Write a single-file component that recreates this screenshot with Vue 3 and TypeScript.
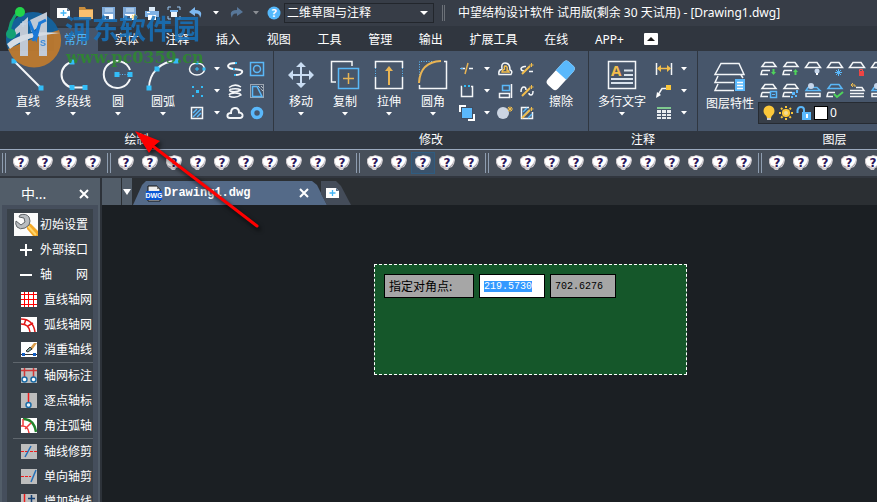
<script setup lang="ts">
import { onMounted, ref } from 'vue'

type Tool = { icon: string; label: string }
type SmallTool = { icon: string; label: string; menu?: boolean }

const W = 'fill="none" stroke="#f4f6f8" stroke-width="2"'
const W1 = 'fill="none" stroke="#f4f6f8" stroke-width="1.5"'
const B = 'fill="none" stroke="#5ab8f8" stroke-width="1.5"'
const Y = 'fill="none" stroke="#e8b454" stroke-width="2"'
const sq = (x: number, y: number, s = 5) =>
  `<rect x="${x - s / 2}" y="${y - s / 2}" width="${s}" height="${s}" fill="#33bdf8"/>`
const cap = `<path d="M5 2.500H13L16.500 7.500H1.500Z" ${W1}/>`
const stack = `<path d="M5 2.500H13L16 6.500H2Z M2 10.500H10M2 10.500L1 14.500H8" ${W1}/>`
const spark = '<path d="M4 14L12 6" stroke="#f2bd4b" stroke-width="2"/><path d="M13.500 3V7M11.500 5H15.500" stroke="#f2bd4b"/>'

/* Each entry is [width, height, markup]. */
const icons: Record<string, [number, number, string]> = {
  newFile: [14, 12, '<path d="M0 1H10L13 4V11H0Z" fill="#fff"/><path d="M10 1V4H13Z" fill="#56718f"/><path d="M6.500 3V9M3.500 6H9.500" stroke="#42b4f5" stroke-width="1.300"/>'],
  open: [14, 12, '<path d="M0 0H6L7 2H14V12H0Z" fill="#c98d3d"/><path d="M0 3H14V12H0Z" fill="#f8c070"/>'],
  save: [14, 14, '<path d="M1 1H14V14H1Z" fill="#7da9d9"/><path d="M4 2H12V6H4Z" fill="#a9c8e8"/><path d="M3 8H12V14H3Z" fill="#fff"/><path d="M5 10H8V13H5Z" fill="#42597a"/>'],
  saveAs: [16, 14, '<path d="M1 1H14V14H1Z" fill="#7da9d9"/><path d="M4 2H12V6H4Z" fill="#a9c8e8"/><path d="M3 8H12V14H3Z" fill="#fff"/><path d="M5 10H8V13H5Z" fill="#42597a"/><path d="M12.500 8V14M9.500 11H15.500M10 9L15 13M15 9L10 13" stroke="#f4d069"/>'],
  print: [14, 14, '<path d="M4 1H10V5H4Z" fill="#dbe9f7"/><path d="M0 5H14V11H0Z" fill="#7fb2e5"/><path d="M3 9H11V14H3Z" fill="#fff"/><path d="M2 6.500H5" stroke="#fff"/>'],
  preview: [14, 14, '<path d="M1 4V1H4M10 1H13V4M13 10V13H10M4 13H1V10" fill="none" stroke="#9ccaf5"/><path d="M3 4H11V6H3Z" fill="#72b1ee"/><path d="M4 6H10V11H4Z" fill="#eef5fc"/>'],
  undo: [14, 12, '<path d="M6 0L0 5L6 9V6.500Q11 6 11 11Q15 3 6 3Z" fill="#7db9f2"/>'],
  redo: [14, 12, '<path d="M8 0L14 5L8 9V6.500Q3 6 3 11Q-1 3 8 3Z" fill="#587799"/>'],
  help: [14, 14, '<circle cx="7" cy="7" r="6.500" fill="#55b8fb"/><text x="7" y="11" text-anchor="middle" font-family="Open Sans" font-weight="700" font-size="11" fill="#fff">?</text>'],
  line: [34, 34, `<path d="M3 3L30 30" ${W}/>${sq(3, 3)}${sq(30, 30)}`],
  polyline: [34, 34, `<path d="M16 4A13 13 0 0 0 16 29.500H29" ${W}/>${sq(16, 4)}${sq(16, 29.5)}${sq(29, 29.5)}`],
  circle: [34, 34, `<path d="M29 12A13.500 13.500 0 1 0 29 21" ${W}/><path d="M16 16.500H29" stroke="#5ab8f8" stroke-dasharray="1 1.500"/>${sq(16, 16.5)}${sq(29, 16.5)}`],
  arc: [34, 34, `<path d="M3 30A27 27 0 0 1 30 3" ${W}/>${sq(3, 30)}${sq(11, 11)}${sq(30, 3)}`],
  move: [34, 34, '<path d="M17 6V28M6 17H28" stroke="#c9dcf2" stroke-width="2"/><path d="M17 4L12 9H22ZM17 30L12 25H22ZM4 17L9 12V22ZM30 17L25 12V22Z" fill="#c9dcf2"/>'],
  copy: [34, 34, `<path d="M24 8V3.500H3.500V24H8" ${W1}/><rect x="10.500" y="10.500" width="20" height="20" ${B}/><path d="M20.500 15V26M15 20.500H26" stroke="#e8b454" stroke-width="1.500"/>`],
  stretch: [34, 34, `<path d="M3.500 10V3.500H30.500V10M3.500 19V30.500H30.500V19" ${W1}/><path d="M3.500 10V19M30.500 10V19" stroke="#5ab8f8" stroke-dasharray="1 1.500"/><path d="M17 10V27" ${Y}/><path d="M17 8L13 13H21Z" fill="#e8b454"/>`],
  fillet: [34, 34, `<path d="M28 3.500H30.500V30.500H3.500V27" ${W1}/><path d="M3.500 22V3.500H16" fill="none" stroke="#5ab8f8" stroke-dasharray="1 1.500"/><path d="M3 25Q4 4 25 3" ${Y}/>`],
  eraser: [34, 34, '<g transform="rotate(-48 17 17)"><rect x="1" y="10" width="31" height="14" rx="4" fill="#fff"/><path d="M17 10H28Q32 10 32 14V20Q32 24 28 24H17Z" fill="#5ab8fb"/></g>'],
  mtext: [34, 34, `<rect x="3.500" y="3.500" width="27" height="27" ${W1}/><text x="6" y="18" font-family="Open Sans" font-weight="700" font-size="15" fill="#f2bd4b">A</text><path d="M19 12.500H28M19 17H28" stroke="#d9e2ec" stroke-width="2"/><path d="M6 21H28M6 25H28" stroke="#d9e2ec" stroke-width="2"/>`],
  layers: [34, 34, `<path d="M8 5.500H26L31 16.500H2Z M5 18L2 24.500H21M5 26L2 32.500H21M28 17L30 20" ${W1}/><rect x="22" y="21" width="10" height="12" fill="#5ab8fb"/><path d="M24 24.500H30M24 27.500H30M24 30.500H30" stroke="#fff" stroke-width="1.500"/>`],
  ellipse: [18, 18, `<ellipse cx="9" cy="9" rx="7.500" ry="6" ${W1}/><path d="M9 7V11M7 9H11" stroke="#33bdf8"/>${sq(9, 3, 3)}${sq(16, 9, 3)}`],
  spline: [18, 18, `<path d="M10 3C0 3 0 8 7 9S17 10 16 12.500S12 15 9 15" ${W}/>${sq(10, 3, 2)}${sq(8, 9, 2)}${sq(9, 15, 2)}`],
  region: [18, 18, `<rect x="2.500" y="2.500" width="13" height="13" ${B}/><circle cx="9" cy="9" r="3.500" ${B}/>`],
  points: [18, 18, `${sq(5, 5, 2)}${sq(14, 5, 2)}${sq(9.5, 9.5, 3)}${sq(5, 14, 2)}${sq(14, 14, 2)}`],
  helix: [18, 18, `<path d="M3 5.500Q9 1 15 5M15 8Q9 11 4 9Q3 7 6 7Q11 6 15 8M3 13Q4 11 9 11T15 13Q9 17 3 14" ${W1}/>`],
  wipeout: [18, 18, `<rect x="2.500" y="2.500" width="13" height="13" fill="none" stroke="#f4f6f8" stroke-dasharray="1 1"/><path d="M4.500 4.500H9L14 14.500H4.500Z" ${B}/><path d="M10 4L15 9M13 4L15 6" stroke="#f4f6f8" stroke-dasharray="1 1"/>`],
  hatch: [18, 18, `<rect x="3.500" y="3.500" width="11" height="11" ${W1}/><path d="M5 9L9 5M5 13L13 5M9 13L13 9" stroke="#5ab8f8" stroke-width="1.500"/>`],
  cloud: [18, 18, `<path d="M4 14Q1 14 1.500 11Q2 9 5 9Q5 4 9 4Q13 4 13 8.500Q17 9 16.500 12Q16 14 14 14Z" ${W}/>`],
  donut: [18, 18, '<circle cx="9" cy="9" r="4.500" fill="none" stroke="#5ab8fb" stroke-width="3.500"/>'],
  trim: [18, 18, '<path d="M3 8.500H7M11 8.500H15" stroke="#f4f6f8" stroke-width="1.500"/><path d="M10 3L7 14" stroke="#e8b454" stroke-width="1.500"/><path d="M2 8.500H5" stroke="#5ab8f8"/>'],
  offset: [18, 18, `<path d="M3 14.500H15Q17 11 14 10Q14 3 9 3Q5 3 6 9Q2 10 3 14.500Z" ${W1}/><path d="M6 12H13Q12 10 11 10Q12 6 9 6Q8 6 8.500 9Q6 10 6 12Z" fill="none" stroke="#f2bd4b" stroke-width="1.500"/>`],
  breakLine: [18, 18, `<path d="M6 11Q3 11 3 8.500Q4 6 8 6.500M11 11.500H15" ${W1}/>${spark}`],
  array: [18, 18, `<path d="M4 4.500H3.500V14.500H14.500V4.500H13" ${W1}/>${sq(7, 4, 2)}${sq(11, 4, 2)}`],
  align: [18, 18, `<rect x="6.500" y="3.500" width="7" height="5" ${B}/><rect x="3.500" y="11.500" width="10" height="4" ${W1}/><path d="M15.500 2V16" ${W1}/>`],
  joinLine: [18, 18, `<path d="M3 10Q3 5 6 5Q8 5 8 8M11 11Q11 13 13 13Q15 13 15 9" ${W1}/>${spark}`],
  order: [18, 18, '<path d="M10 10H17V17H10Z" fill="#fff"/><path d="M1 1H8V4H4V8H1Z" fill="#fff"/><rect x="3.500" y="3.500" width="11" height="11" fill="#5ab8fb" stroke="#3f4d60"/>'],
  explode: [18, 18, '<circle cx="7" cy="9" r="6" fill="#ccd5e3"/><path d="M14 2.500V8M11.500 5H17M12 3L16 7M16 3L12 7" stroke="#f2bd4b"/>'],
  editHatch: [18, 18, `<path d="M11 3.500H3.500V14.500H14.500V8" ${W1}/><path d="M5 8L9 4M5 12L11 6M10 14L14 10" stroke="#5ab8f8" stroke-width="1.500"/>${spark}`],
  dim: [18, 18, '<path d="M1.500 3V15M16.500 3V15" stroke="#f4f6f8" stroke-width="1.500"/><path d="M3 8.500H15" stroke="#f2bd4b" stroke-width="1.500"/><path d="M2 8.500L6 5V12ZM16 8.500L12 5V12Z" fill="#f2bd4b"/>'],
  leader: [18, 18, `<path d="M3 13L7 6.500H12" ${W1}/><path d="M1 16L2 10L6 13Z" fill="#fff"/><rect x="11" y="3" width="5" height="5" fill="#fbc73a"/>`],
  table: [18, 18, '<path d="M2 3H16V5H2Z" fill="#7fc98f"/><path d="M2 6H6V9H2ZM7 6H11V9H7ZM12 6H16V9H12ZM2 10H6V12H2ZM7 10H11V12H7ZM12 10H16V12H12ZM2 13H6V15H2ZM7 13H11V15H7ZM12 13H16V15H12Z" fill="#e8ecf0"/>'],
  layDown: [18, 18, `${stack}<path d="M13.500 9V13" stroke="#4fd35b" stroke-width="2"/><path d="M11 12H16L13.500 15Z" fill="#4fd35b"/>`],
  layUp: [18, 18, `${stack}<path d="M13.500 11V15" stroke="#4fd35b" stroke-width="2"/><path d="M11 12H16L13.500 9Z" fill="#4fd35b"/>`],
  layOff: [18, 18, `${cap}<circle cx="13" cy="11" r="2.500" fill="#c5d5ea"/><path d="M12 13H14V15H12Z" fill="#fff"/>`],
  layFreeze: [18, 18, `${cap}<path d="M12.500 9V16M9 12.500H16M10 10L15 15M15 10L10 15" stroke="#5ab8fb"/>`],
  layLock: [18, 18, `${cap}<path d="M11.500 11V9.500H14.500V11" fill="none" stroke="#ee5555"/><rect x="11" y="11" width="5" height="5" fill="#ee4444"/>`],
  layPanel: [18, 18, `${stack}<rect x="10.500" y="9.500" width="6" height="6" fill="#42566e" stroke="#5ab8fb" stroke-width="1.500"/><path d="M12 12.500H15" stroke="#5ab8fb"/>`],
  layWalk: [18, 18, `${stack}<path d="M10 10h3v3h-3zM14 8h2v3h-2zM9 14h2v2h-2zM13 13h2v2h-2z" fill="#5ab8fb"/>`],
  layIso: [18, 18, `<path d="M2 14.500H16V11.500H2Z" ${W1}/><path d="M4 5.500H13L16 8.500H2Z" ${B}/><circle cx="7" cy="4" r="3" fill="#c5d5ea"/>`],
  layMatch: [18, 18, `<path d="M5 2.500H13L16 6.500H2Z" ${B}/><path d="M2 10.500H9M2 10.500L1 14.500H7" ${W1}/><path d="M8 12L11 15L17 10" fill="none" stroke="#4fd35b" stroke-width="2"/>`],
  layPrev: [18, 18, `<path d="M8 5.500H14L16 8.500H2M2 11.500H16M2 14.500H16" ${W1}/><path d="M5 1L3 3L5 5M3 3H7V5" fill="none" stroke="#f2bd4b"/>`],
  bulb: [14, 16, '<circle cx="7" cy="6" r="5.500" fill="#fbc73a"/><path d="M4 10H10L9 13H5Z" fill="#fbc73a"/><path d="M5 14H9" stroke="#fff" stroke-width="1.500"/>'],
  sun: [16, 16, '<circle cx="8" cy="8" r="4" fill="#fbc73a"/><path d="M8 1V15M1 8H15M3 3L13 13M13 3L3 13" stroke="#fbc73a" stroke-width="2" stroke-dasharray="2 1"/><circle cx="8" cy="8" r="2" fill="#f3dc96"/>'],
  unlock: [16, 16, '<path d="M1.500 8V5Q2 2 5 2T8 5V8" fill="none" stroke="#5ab8fb" stroke-width="2"/><rect x="6" y="7" width="9" height="8" fill="#5ab8fb"/><path d="M10 9H12V13H10Z" fill="#fff"/>'],
  question: [18, 18, '<path d="M2 4L4 2H7L9 1L13 2L16 3L17 6L16 10L14 13L11 14L10 16H7L5 14L3 13L1 9V5Z" fill="#cfcace"/><path d="M2 5L5 3L9 2L14 3L16 5L15 8L13 11L9 14L6 12L3 11L2 8Z" fill="#fff"/><path d="M3 12L6 13M12 13L15 10" stroke="#a9a3ab"/><text x="9" y="13" text-anchor="middle" font-family="DejaVu Sans" font-weight="700" font-size="12" fill="#2c1559">?</text>'],
  wrench: [24, 23, '<path d="M0 0H24V23H0Z" fill="#fbfbfb"/><path d="M12 9L17 11L24 18V23H19L13 16Z" fill="#f4a928"/><path d="M14 13L22 22" stroke="#ffd66b" stroke-width="2"/><path d="M6 2Q12 0 15 4Q17 8 15 12L11 15Q6 17 3 14Q1 11 2 8L7 12L11 9L10 5L5 4Z" fill="#b8bcc0" stroke="#5f6468"/>'],
  plus: [14, 14, '<path d="M7 1V13M1 7H13" stroke="#fff" stroke-width="2"/>'],
  minus: [14, 14, '<path d="M1 7H13" stroke="#fff" stroke-width="2"/>'],
  grid: [16, 15, '<path d="M0 0H16V15H0Z" fill="#fff"/><path d="M0 2.500H16M0 7.500H16M0 12.500H16M3.500 0V15M7.500 0V15M12.500 0V15" stroke="#f00"/>'],
  arcGrid: [16, 15, '<path d="M0 0H16V15H0Z" fill="#fff"/><path d="M0 2Q12 2 14 15M0 7Q8 7 9 15M5 2L3 8M12 6L7 9" fill="none" stroke="#e31818" stroke-width="1.500"/>'],
  dedupe: [16, 15, '<path d="M0 0H16V15H0Z" fill="#fff"/><path d="M8 7L13 1H16L11 8Z" fill="#d99c4a"/><path d="M5 9L9 5L11 7L7 10Z" fill="#7aa3a0" stroke="#333"/><path d="M0 12.500H16" stroke="#333"/><path d="M1 11h3v3h-3zM12 11h3v3h-3z" fill="#125ec4"/>'],
  axisDim: [16, 15, '<path d="M0 0H16V15H0Z" fill="#bdbdbd"/><path d="M0 2.500H16M3.500 0V9M12.500 0V9" stroke="#cf3838" stroke-width="1.500"/><circle cx="3.500" cy="11.500" r="2.500" fill="#fff" stroke="#1c6ca6" stroke-width="1.500"/><circle cx="12.500" cy="11.500" r="2.500" fill="#fff" stroke="#1c6ca6" stroke-width="1.500"/>'],
  pointDim: [16, 15, '<path d="M0 0H16V15H0Z" fill="#bdbdbd"/><path d="M7.500 0V9" stroke="#ee1c1c" stroke-width="1.500"/><circle cx="7.500" cy="12" r="2.500" fill="#e8f6ff" stroke="#1c6ca6" stroke-width="1.500"/>'],
  arcDim: [16, 15, '<path d="M0 0H16V15H0Z" fill="#fff"/><path d="M2 1Q13 1 15 14" fill="none" stroke="#23842d" stroke-width="2.500"/><path d="M0 8Q7 7 8 15M2 1V8M10 5L4 11" fill="none" stroke="#ef3a3a" stroke-width="1.500"/>'],
  axisTrim: [16, 15, '<path d="M0 0H16V15H0Z" fill="#bdbdbd"/><path d="M0 7.500H7M9 7.500H16" stroke="#ef1c1c" stroke-dasharray="3 1"/><path d="M4 13L10 2" stroke="#236eb7" stroke-width="1.500"/>'],
  oneTrim: [16, 15, '<path d="M0 0H16V15H0Z" fill="#bdbdbd"/><path d="M0 7.500H10" stroke="#ef1c1c" stroke-dasharray="3 1"/><path d="M10 13L15 1" stroke="#236eb7" stroke-width="1.500"/>'],
  addAxis: [16, 15, '<path d="M0 0H16V15H0Z" fill="#bdbdbd"/><path d="M3.500 0V15" stroke="#ef1c1c" stroke-width="1.500"/><path d="M10.500 1V8M7 4.500H14" stroke="#123f73" stroke-width="1.500"/>'],
  dwg: [18, 17, '<path d="M3 1H12L15 4V16H3Z" fill="#eee" stroke="#111"/><path d="M12 1V4H15" fill="#777"/><path d="M1 6H17V15H1Z" fill="#0a57d5"/><text x="9" y="13" text-anchor="middle" font-family="Liberation Sans" font-size="7" fill="#fff">DWG</text>'],
  close: [10, 10, '<path d="M1 1L9 9M9 1L1 9" stroke="#fff" stroke-width="2"/>'],
  down: [6, 4, '<path d="M0 0H6L3 3.500Z" fill="#fff"/>'],
  downDim: [6, 4, '<path d="M0 0H6L3 3.500Z" fill="#8b8f95"/>'],
  downWide: [8, 4, '<path d="M0 0H8L4 4Z" fill="#fff"/>'],
  downTall: [8, 8, '<path d="M0 1H8L4 7Z" fill="#fff"/>'],
  up: [14, 12, '<rect width="14" height="12" rx="1" fill="#fff"/><path d="M3 8H11L7 4Z" fill="#1b1b1b"/>'],
}

const quick = ['newFile', 'open', 'save', 'saveAs', 'print', 'preview', 'undo']
const tabs = ['常用', '实体', '注释', '插入', '视图', '工具', '管理', '输出', '扩展工具', '在线', 'APP+']
const drawTools: Tool[] = [
  { icon: 'line', label: '直线' },
  { icon: 'polyline', label: '多段线' },
  { icon: 'circle', label: '圆' },
  { icon: 'arc', label: '圆弧' },
]
const modifyTools: Tool[] = [
  { icon: 'move', label: '移动' },
  { icon: 'copy', label: '复制' },
  { icon: 'stretch', label: '拉伸' },
  { icon: 'fillet', label: '圆角' },
]
const drawSmall: SmallTool[] = [
  { icon: 'ellipse', label: '椭圆', menu: true }, { icon: 'spline', label: '样条曲线' }, { icon: 'region', label: '面域' },
  { icon: 'points', label: '点', menu: true }, { icon: 'helix', label: '螺旋' }, { icon: 'wipeout', label: '区域覆盖' },
  { icon: 'hatch', label: '填充', menu: true }, { icon: 'cloud', label: '云线' }, { icon: 'donut', label: '圆环' },
]
const modifySmall: SmallTool[] = [
  { icon: 'trim', label: '修剪', menu: true }, { icon: 'offset', label: '偏移' }, { icon: 'breakLine', label: '打断' },
  { icon: 'array', label: '阵列', menu: true }, { icon: 'align', label: '对齐' }, { icon: 'joinLine', label: '合并' },
  { icon: 'order', label: '次序', menu: true }, { icon: 'explode', label: '分解' }, { icon: 'editHatch', label: '编辑填充' },
]
const noteSmall: SmallTool[] = [
  { icon: 'dim', label: '标注', menu: true },
  { icon: 'leader', label: '引线', menu: true },
  { icon: 'table', label: '表格', menu: true },
]
const layerTools = [
  'layDown', 'layUp', 'layOff', 'layFreeze', 'layLock', 'layOff',
  'layPanel', 'layWalk', 'layIso', 'layMatch', 'layPrev', 'layIso',
]
const groups = [4, 10, 5, 11, 5]
const side = [
  [
    { icon: 'wrench', label: '初始设置', top: true },
    { icon: 'plus', label: '外部接口', top: true },
    { icon: 'minus', label: '轴　　网', top: true },
    { icon: 'grid', label: '直线轴网' },
    { icon: 'arcGrid', label: '弧线轴网' },
    { icon: 'dedupe', label: '消重轴线' },
  ],
  [
    { icon: 'axisDim', label: '轴网标注' },
    { icon: 'pointDim', label: '逐点轴标' },
    { icon: 'arcDim', label: '角注弧轴' },
  ],
  [
    { icon: 'axisTrim', label: '轴线修剪' },
    { icon: 'oneTrim', label: '单向轴剪' },
    { icon: 'addAxis', label: '增加轴线' },
  ],
]

const icon = (name: string) => ({
  width: icons[name][0],
  height: icons[name][1],
  viewBox: `0 0 ${icons[name][0]} ${icons[name][1]}`,
  innerHTML: icons[name][2],
  'aria-hidden': true,
})

const workspace = ref('二维草图与注释')
const cornerX = ref('219.5730')
const cornerY = ref('702.6276')
const cornerInput = ref<HTMLInputElement | null>(null)
onMounted(() => {
  cornerInput.value?.focus({ preventScroll: true })
  cornerInput.value?.select()
})
</script>

<template>
  <div class="app">
    <header class="head">
      <div class="titlebar">
        <div class="quick">
          <button v-for="q in quick" :key="q" :aria-label="q"><svg v-bind="icon(q)" /></button>
          <button class="narrow" aria-label="undo menu"><svg v-bind="icon('down')" /></button>
          <button aria-label="redo"><svg v-bind="icon('redo')" /></button>
          <button class="narrow" aria-label="redo menu"><svg v-bind="icon('downDim')" /></button>
          <button class="narrow" aria-label="help"><svg v-bind="icon('help')" /></button>
        </div>
        <label class="workspace">
          <select v-model="workspace" aria-label="工作空间">
            <option>二维草图与注释</option>
          </select>
          <svg v-bind="icon('downWide')" />
        </label>
        <span class="handle"></span>
        <h1>中望结构设计软件 试用版(剩余 30 天试用) - [Drawing1.dwg]</h1>
      </div>
      <div class="tabrow">
        <nav>
          <a v-for="(t, i) in tabs" :key="t" href="#" :class="{ active: i === 0 }">{{ t }}</a>
        </nav>
        <button aria-label="collapse"><svg v-bind="icon('up')" /></button>
      </div>
    </header>

    <div class="ribbon">
      <section class="panel draw">
        <div class="body">
          <div class="bigs spaced">
            <button v-for="t in drawTools" :key="t.label" class="big">
              <svg v-bind="icon(t.icon)" /><span>{{ t.label }}</span><svg v-bind="icon('down')" />
            </button>
          </div>
          <div class="smalls">
            <template v-for="s in drawSmall" :key="s.label">
              <button :aria-label="s.label"><svg v-bind="icon(s.icon)" /></button>
              <button v-if="s.menu" :aria-label="s.label + '菜单'"><svg v-bind="icon('down')" /></button>
            </template>
          </div>
        </div>
        <h2>绘制</h2>
      </section>
      <section class="panel modify">
        <div class="body">
          <div class="bigs">
            <button v-for="t in modifyTools" :key="t.label" class="big">
              <svg v-bind="icon(t.icon)" /><span>{{ t.label }}</span><svg v-bind="icon('down')" />
            </button>
          </div>
          <div class="smalls">
            <template v-for="s in modifySmall" :key="s.label">
              <button :aria-label="s.label"><svg v-bind="icon(s.icon)" /></button>
              <button v-if="s.menu" :aria-label="s.label + '菜单'"><svg v-bind="icon('down')" /></button>
            </template>
          </div>
          <button class="big"><svg v-bind="icon('eraser')" /><span>擦除</span></button>
        </div>
        <h2>修改</h2>
      </section>
      <section class="panel note">
        <div class="body">
          <button class="big wide">
            <svg v-bind="icon('mtext')" /><span>多行文字</span><svg v-bind="icon('down')" />
          </button>
          <div class="smalls pair">
            <template v-for="s in noteSmall" :key="s.label">
              <button :aria-label="s.label"><svg v-bind="icon(s.icon)" /></button>
              <button :aria-label="s.label + '菜单'"><svg v-bind="icon('down')" /></button>
            </template>
          </div>
        </div>
        <h2>注释</h2>
      </section>
      <section class="panel layer">
        <div class="body">
          <button class="big wide props"><svg v-bind="icon('layers')" /><span>图层特性</span></button>
          <div class="layerside">
            <div class="layergrid">
              <button v-for="(l, i) in layerTools" :key="i" :aria-label="l"><svg v-bind="icon(l)" /></button>
            </div>
            <button class="current">
              <svg v-bind="icon('bulb')" /><svg v-bind="icon('sun')" /><svg v-bind="icon('unlock')" />
              <i></i><span>0</span>
            </button>
          </div>
        </div>
        <h2>图层</h2>
      </section>
    </div>

    <div class="toolbar">
      <div v-for="(n, g) in groups" :key="g" class="group">
        <span class="grip"></span>
        <button v-for="k in n" :key="k" :class="{ hot: g === 2 && k === 3 }" aria-label="工具">
          <svg v-bind="icon('question')" />
        </button>
      </div>
    </div>

    <div class="work">
      <aside>
        <div class="sidehead"><span>中...</span><button aria-label="关闭"><svg v-bind="icon('close')" /></button></div>
        <div class="sidebody">
          <div class="list">
            <ul v-for="(s, i) in side" :key="i">
              <li v-for="e in s" :key="e.label">
                <button :class="{ top: 'top' in e }">
                  <b><svg v-bind="icon(e.icon)" /></b><span>{{ e.label }}</span>
                </button>
              </li>
            </ul>
          </div>
        </div>
      </aside>
      <main>
        <div class="docs">
          <span class="cell"></span>
          <button class="cell pick" aria-label="文档列表"><svg v-bind="icon('downTall')" /></button>
          <div class="doc">
            <svg v-bind="icon('dwg')" /><span>Drawing1.dwg</span>
            <button aria-label="关闭文档"><svg v-bind="icon('close')" /></button>
          </div>
          <button class="add" aria-label="新建"><svg v-bind="icon('newFile')" /></button>
        </div>
        <div class="canvas">
          <div class="window">
            <label for="cx">指定对角点:</label>
            <input id="cx" ref="cornerInput" v-model="cornerX" />
            <input v-model="cornerY" class="idle" aria-label="Y" />
          </div>
        </div>
      </main>
    </div>

    <div class="brand">
      <svg class="emblem" width="62" height="72" viewBox="0 0 62 72" aria-hidden="true">
        <circle cx="33" cy="39" r="27" fill="#14639f" />
        <path d="M8 49Q32 38 59 30A27 27 0 0 1 9 51Z" fill="#bd7a30" />
        <path d="M15 29L28 17V56H20V32L14 36ZM30 20L47 12V56H39V27L31 32Z" fill="#c9d2de" />
        <path d="M7 44Q22 29 60 33Q25 36 10 49Z" fill="#dfe6ee" />
        <path d="M29 21L36 38L40 22M33 41L40 23L46 20" fill="none" stroke="#1b7de0" stroke-width="3" />
        <text x="40" y="46" font-family="Liberation Sans" font-weight="700" font-size="9" fill="#3d8fe0">S</text>
        <path d="M20 10Q8 22 10 34" fill="none" stroke="#12a878" stroke-width="3" />
        <circle cx="20" cy="12" r="5" fill="#22dd4c" />
        <circle cx="11" cy="34" r="5" fill="#12a878" />
        <path d="M23 21V27M20 24H26" stroke="#cfe0f2" />
      </svg>
      <strong>河东软件园</strong>
      <em>www.pc0359.cn</em>
    </div>
    <svg class="pointer" width="136" height="108" viewBox="0 0 136 108" aria-hidden="true">
      <path d="M22 20L125 99" stroke="#fe0000" stroke-width="3" stroke-linecap="round" />
      <path d="M3 4L28 14L22 19L17 26Z" fill="#fe0000" />
    </svg>
  </div>
</template>

<style>
body {
  margin: 0;
  overflow: hidden;
  background: #1b1f23;
}
</style>

<style scoped>
.app {
  position: relative;
  display: flex;
  flex-direction: column;
  height: 100vh;
  overflow: hidden;
  color: #fff;
  font: 12px/16px "Noto Sans", "Noto Sans CJK SC", sans-serif;
}
.app * { box-sizing: border-box; }
svg { display: block; flex: none; }
button {
  display: flex;
  align-items: center;
  justify-content: center;
  padding: 0;
  border: 0;
  background: none;
  color: inherit;
  font: inherit;
}
h1, h2, ul { margin: 0; padding: 0; font: inherit; list-style: none; }
a { color: inherit; text-decoration: none; }

.head { background: linear-gradient(90deg, #2a2f38 50px, #30363f 50px); }
.titlebar {
  display: flex;
  align-items: center;
  height: 26px;
  margin-left: 50px;
  background: #373d47;
  white-space: nowrap;
}
.quick { display: flex; padding: 0 1px 0 3px; }
.quick button { width: 22px; height: 22px; }
.quick button.narrow { width: 18px; }
.workspace { position: relative; flex: none; width: 150px; height: 20px; }
.workspace select {
  width: 100%;
  height: 100%;
  padding: 0 2px;
  border: 1px solid #22262c;
  background: #373d47;
  color: #fff;
  font: inherit;
  appearance: none;
}
.workspace svg { position: absolute; right: 6px; top: 8px; }
.handle { width: 3px; height: 16px; margin: 0 13px 0 8px; border: solid #6b7077; border-width: 0 1px; }
.tabrow { display: flex; align-items: center; height: 25px; padding-left: 54px; }
nav { display: flex; flex: 0 0 580px; justify-content: space-between; height: 100%; }
nav a { padding: 6px 10px 0; }
nav a.active { margin-top: 2px; padding-top: 4px; background: #47566b; color: #4db8fa; }
.tabrow button { margin-left: 10px; height: 20px; }

.ribbon { display: flex; flex: none; overflow: hidden; border-bottom: 1px solid #9aa9be; background: #47566b; }
.panel { flex: none; border-right: 1px solid #303741; }
.panel.draw { width: 274px; }
.panel.modify { width: 315px; }
.panel.note { width: 109px; }
.panel.layer { flex: 1 0 274px; }
.body { display: flex; height: 80px; padding: 7px 0 0 5px; }
.draw .body { padding-left: 6px; }
.layer .body { padding-left: 4px; }
.bigs { display: flex; }
.bigs.spaced { gap: 1px; }
.big {
  flex: none;
  flex-direction: column;
  justify-content: flex-start;
  width: 44px;
  height: 70px;
  gap: 2px;
  white-space: nowrap;
}
.big.wide { width: 56px; }
.big.props { gap: 4px; }
.smalls { display: grid; grid-template-columns: 24px 16px 20px 24px; grid-auto-rows: 22px; }
.smalls.pair { grid-template-columns: 24px 16px; }
.note .smalls { margin-left: 2px; }
.panel h2 { height: 18px; background: #303741; line-height: 18px; text-align: center; }
.layerside { flex: 1; overflow: hidden; }
.layergrid { display: grid; grid-template-columns: repeat(6, 22px); grid-auto-rows: 22px; }
.current {
  justify-content: flex-start;
  gap: 2px;
  width: 100%;
  height: 22px;
  padding-left: 3px;
  border: 1px solid #262b32;
  background: #373e48;
}
.current i { width: 14px; height: 14px; border: 1px solid #000; background: #fff; }

.toolbar {
  display: flex;
  flex: none;
  height: 28px;
  overflow: hidden;
  border-bottom: 2px solid #31363e;
  background: #474f5a;
}
.group { display: flex; flex: none; align-items: center; }
.group button { width: 24px; height: 22px; }
.group button.hot { border: 1px solid #2f5c80; background: #3b536c; }
.grip { width: 4px; height: 20px; margin: 0 3px 0 2px; border: solid #8e9db0; border-width: 0 1px; background: #474f5a; }

.work { display: flex; flex: 1; min-height: 0; }
aside {
  display: flex;
  flex: none;
  flex-direction: column;
  width: 102px;
  border-right: 2px solid #2d3239;
  background: #525d69;
}
.sidehead {
  display: flex;
  align-items: center;
  justify-content: space-between;
  height: 27px;
  padding: 4px 11px 0 21px;
  font-size: 14px;
}
.sidebody { flex: 1; margin: 0 2px; padding: 4px 5px 0; overflow: hidden; background: #454e5c; }
.list { height: 100%; padding-top: 3px; overflow: hidden; background: #394149; }
ul + ul { margin-left: 6px; border-top: 1px solid #5f666d; }
li button { justify-content: flex-start; gap: 7px; width: 100%; height: 25px; padding-left: 14px; white-space: nowrap; }
ul + ul li button { padding-left: 8px; }
li button.top { gap: 2px; padding-left: 7px; }
li b { display: flex; justify-content: center; width: 16px; font-weight: 400; }
li .top b { width: 24px; }

main { display: flex; flex: 1; flex-direction: column; min-width: 0; background: #1b1f23; }
.docs { display: flex; flex: none; height: 27px; background: #2b2f33; }
.cell { width: 19px; margin-right: 1px; background: #525d69; }
.cell + .cell { width: 10px; }
.doc {
  display: flex;
  align-items: center;
  width: 194px;
  margin-top: 3px;
  padding: 0 18px 0 12px;
  background: #546a88;
  clip-path: polygon(0 100%, 9px 4px, 13px 0, 179px 0, 184px 4px, 100% 100%);
  font: bold 12px/16px "Liberation Mono", monospace;
}
.doc span { flex: 1; padding-left: 1px; }
.add {
  justify-content: flex-start;
  width: 30px;
  margin: 3px 0 0 -6px;
  padding-left: 5px;
  background: #444c59;
  clip-path: polygon(0 0, 15px 0, 20px 5px, 100% 100%, 6px 100%, 0 13px);
}
.canvas { position: relative; flex: 1; }
.window {
  position: absolute;
  left: 272px;
  top: 59px;
  display: flex;
  gap: 5px;
  align-items: flex-start;
  width: 313px;
  height: 111px;
  padding: 9px;
  border: 1px dashed #fff;
  background: #15572a;
}
.window label, .window input {
  width: 66px;
  height: 24px;
  padding: 0 4px;
  border: 1px solid #000;
  border-radius: 0;
  outline: none;
  background: #fff;
  color: #000;
  font: 12px/22px "Noto Sans CJK SC", sans-serif;
}
.window label { width: 90px; background: #a6a6a6; }
.window input { font: 10px/14px "Liberation Mono", monospace; }
.window input.idle { background: #a6a6a6; }
.window input::selection { background: #3399ff; color: #fff; }

.brand { position: absolute; left: 0; top: 0; pointer-events: none; }
.emblem { opacity: 0.95; }
.brand strong {
  position: absolute;
  left: 65px;
  top: 10px;
  color: #1672bd;
  font: 700 27px/36px "Noto Sans CJK SC", sans-serif;
  opacity: 0.85;
  white-space: nowrap;
}
.brand em {
  position: absolute;
  left: 66px;
  top: 47px;
  color: #2f8731;
  font: normal 700 16px/22px "DejaVu Serif", serif;
  opacity: 0.9;
}
.pointer { position: absolute; left: 132px; top: 127px; pointer-events: none; filter: drop-shadow(2px 3px 2px rgba(0, 0, 0, 0.7)); }
</style>
